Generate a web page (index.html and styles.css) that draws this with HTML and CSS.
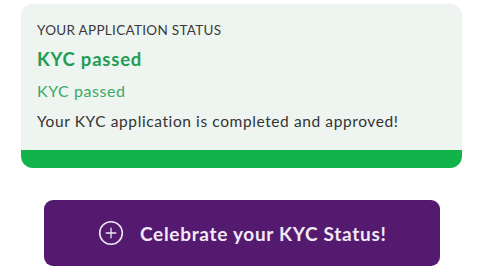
FILE: index.html
```html
<!DOCTYPE html>
<html>
<head>
<meta charset="utf-8">
<link rel="stylesheet" href="styles.css">
</head>
<body>
<div class="page">
  <section class="card">
    <div class="card-body">
      <div class="label">YOUR APPLICATION STATUS</div>
      <div class="title">KYC passed</div>
      <div class="subtitle">KYC passed</div>
      <div class="desc">Your KYC application is completed and approved!</div>
    </div>
    <div class="bar"></div>
  </section>
  <button class="cta">
    <svg class="cta-icon" width="26" height="26" viewBox="0 0 26 26">
      <circle cx="13" cy="13" r="11.3" fill="none" stroke="#f1e6f4" stroke-width="1.6"/>
      <path d="M13 8.2V17.8M8.2 13H17.8" stroke="#f1e6f4" stroke-width="1.3" stroke-linecap="round"/>
    </svg>
    <span class="cta-text">Celebrate your KYC Status!</span>
  </button>
</div>
</body>
</html>
```
FILE: styles.css
```css
html, body {
  margin: 0;
  padding: 0;
  background: #ffffff;
}
.page {
  width: 480px;
  height: 270px;
  display: flex;
  flex-direction: column;
  font-family: Lato, "Open Sans", "Liberation Sans", sans-serif;
}
.card {
  margin: 4px 0 0 21px;
  width: 441px;
  height: 164px;
  border-radius: 12px;
  background: #eef4ef;
  overflow: hidden;
  display: flex;
  flex-direction: column;
  box-shadow: 0 0 2px rgba(0,0,0,0.04);
}
.card-body {
  flex: 1;
  padding: 17px 0 0 16px;
  display: flex;
  flex-direction: column;
}
.label {
  font-size: 13.5px;
  color: #3a3a3a;
  line-height: 18px;
  letter-spacing: 0.3px;
}
.title {
  margin-top: 9px;
  font-size: 18.5px;
  font-weight: 700;
  color: #1f9d55;
  line-height: 23px;
  letter-spacing: 0.8px;
}
.subtitle {
  margin-top: 10px;
  font-size: 16px;
  color: #3aa867;
  line-height: 20px;
  letter-spacing: 0.55px;
}
.desc {
  margin-top: 11px;
  font-size: 15.5px;
  color: #333333;
  line-height: 19px;
  letter-spacing: 0.6px;
}
.bar {
  height: 18px;
  background: #12b34b;
}
.cta {
  margin: 32px 0 0 44px;
  width: 396px;
  height: 66px;
  border: none;
  border-radius: 9px;
  background: #541a70;
  display: flex;
  align-items: center;
  padding: 0 0 0 54px;
  gap: 16px;
  font-family: inherit;
  cursor: pointer;
}
.cta-icon {
  display: block;
  flex: none;
}
.cta-text {
  font-size: 19px;
  font-weight: 700;
  color: #f3e9f6;
  letter-spacing: 0.7px;
}
```
